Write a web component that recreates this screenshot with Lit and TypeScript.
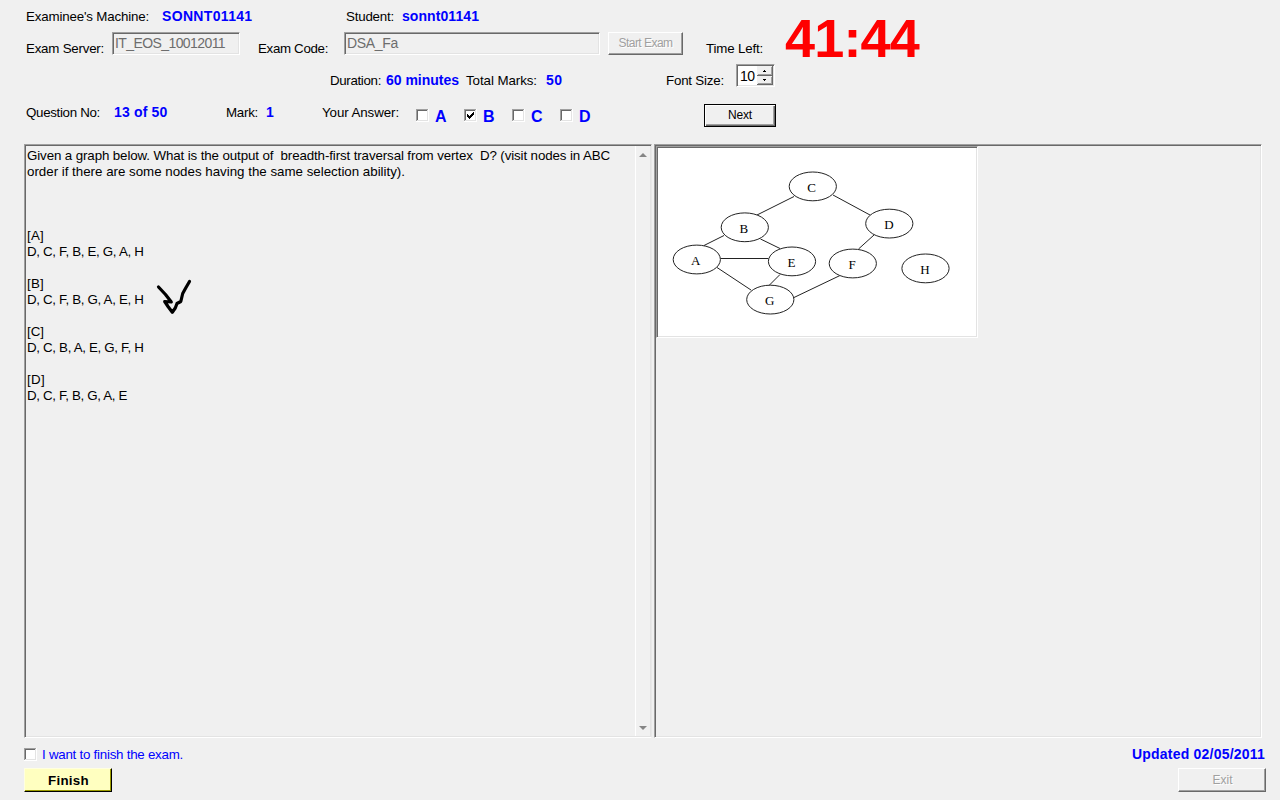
import { LitElement, html, css, svg } from "lit";
import { customElement, property } from "lit/decorators.js";

/** A single line of text whose tracking is adjusted to span a given width. */
@customElement("fit-text")
class FitText extends LitElement {
  @property() text = "";
  @property({ type: Number }) span = 0;
  static styles = css`
    :host { display: block; white-space: pre; width: max-content; }
    span { display: inline-block; }
  `;
  render() {
    return html`<span>${this.text}</span>`;
  }
  updated() {
    const el = this.renderRoot.querySelector("span") as HTMLElement;
    el.style.letterSpacing = "0px";
    const natural = el.getBoundingClientRect().width;
    if (this.span && this.text.length) {
      el.style.letterSpacing = `${(this.span - natural) / this.text.length}px`;
    }
  }
}

@customElement("check-box")
class CheckBox extends LitElement {
  @property({ type: Boolean }) checked = false;
  static styles = css`
    :host { display: block; width: 13px; height: 13px; flex: none; }
    svg { display: block; }
  `;
  render() {
    return html`<svg width="13" height="13" shape-rendering="crispEdges">
      <rect width="13" height="13" fill="#fff" />
      <path d="M0 0H12V1H1V12H0Z" fill="#a0a0a0" />
      <path d="M1 1H11V2H2V11H1Z" fill="#696969" />
      <path d="M11 1H12V12H1V11H11Z" fill="#e3e3e3" />
      ${this.checked
        ? svg`<path d="M3 5h1v1h1v1h1v-1h1v-1h1v-1h1v-1h1v3h-1v1h-1v1h-1v1h-1v1h-1v-1h-1v-1h-1z" fill="#000" />`
        : ""}
    </svg>`;
  }
}

interface Vertex { id: string; x: number; y: number; tx: number; ty: number }

const vertices: Vertex[] = [
  { id: "C", x: 812.8, y: 186.4, tx: 811.6, ty: 191.5 },
  { id: "B", x: 744.8, y: 227.3, tx: 743.8, ty: 232.5 },
  { id: "D", x: 889.3, y: 223.6, tx: 889, ty: 229 },
  { id: "A", x: 696.8, y: 259.5, tx: 695.7, ty: 265.3 },
  { id: "E", x: 792, y: 261.4, tx: 791.5, ty: 266.7 },
  { id: "F", x: 852.8, y: 263.5, tx: 852, ty: 268.7 },
  { id: "H", x: 925.5, y: 268.4, tx: 925, ty: 274 },
  { id: "G", x: 770.3, y: 299.6, tx: 769.8, ty: 304.7 },
];

const edges = [
  [794, 196.5, 757, 215],
  [833, 195, 870, 215],
  [724, 235.5, 704, 245.5],
  [760.5, 239, 780, 248.5],
  [874, 235, 858.5, 249],
  [720.5, 258.5, 768.5, 258.5],
  [717, 267.5, 751, 290],
  [780, 274.5, 769, 285.5],
  [794, 297.5, 840, 275.5],
];

const question = `Given a graph below. What is the output of  breadth-first traversal from vertex  D? (visit nodes in ABC`;

const lines: Array<[string, number]> = [
  [question, 583],
  ["order if there are some nodes having the same selection ability).", 378],
  ["", 0], ["", 0], ["", 0],
  ["[A]", 17], ["D, C, F, B, E, G, A, H", 116.5], ["", 0],
  ["[B]", 17], ["D, C, F, B, G, A, E, H", 116.5], ["", 0],
  ["[C]", 17], ["D, C, B, A, E, G, F, H", 116.5], ["", 0],
  ["[D]", 18], ["D, C, F, B, G, A, E", 100],
];

@customElement("app-root")
class AppRoot extends LitElement {
  static styles = css`
    :host {
      display: block; width: 1280px; height: 800px; overflow: hidden;
      background: #f0f0f0; color: #000;
      font: 13.33px/16px "Liberation Sans", Arial, sans-serif;
    }
    * { box-sizing: border-box; }
    .top { display: flex; height: 64px; }
    .forms { width: 785px; }
    .row { display: grid; height: 32px; padding-left: 26px; align-items: start; }
    .machine { grid-template-columns: 136px 184px 56px auto; padding-top: 9px; }
    .server { grid-template-columns: 86px 146px 86px 264px 98px auto; }
    .low { padding-top: 9px; }
    .b { font-weight: bold; color: #00f; font-size: 14px; }
    .row > .b:not(.choice) { margin-top: -1px; }
    .timer { color: #f00; font-weight: bold; font-size: 54px; line-height: 62px; padding-top: 7px; }
    .duration { grid-template-columns: 56px 80px 80px 120px 70px auto; padding-left: 330px; }
    .answers { grid-template-columns: 88px 112px 40px 56px 94px 48px 48px 48px 144px auto; height: 48px; }
    .choice { display: flex; gap: 6px; padding-top: 13px; font-size: 16px; height: 29px; }
    .choice fit-text { line-height: 16px; }
    .field {
      height: 23px; border: 1px solid; border-color: #a0a0a0 #fff #fff #a0a0a0;
      box-shadow: inset 1px 1px #696969, inset -1px -1px #e3e3e3;
      padding: 2px 0 0 2px; color: #6d6d6d; font-size: 14px;
    }
    .f1 { width: 128px; }
    .f2 { width: 256px; }
    .btn {
      display: flex; justify-content: center; align-items: center;
      height: 24px; border: 1px solid; border-color: #fff #696969 #696969 #fff;
      box-shadow: inset -1px -1px #a0a0a0; font-size: 12px;
    }
    .off { color: #a0a0a0; text-shadow: 1px 1px #fff; }
    .start { width: 75px; height: 23px; padding-bottom: 2px; }
    .next { width: 72px; height: 23px; margin-top: 8px; padding-bottom: 2px; border: 1px solid #000;
      box-shadow: inset 1px 1px #fff, inset -1px -1px #696969, inset -2px -2px #a0a0a0; }
    .spin {
      display: flex; width: 39px; height: 23px; background: #fff; color: #000;
      border: 1px solid; border-color: #a0a0a0 #fff #fff #a0a0a0;
      box-shadow: inset 1px 1px #696969, inset -1px -1px #e3e3e3;
      padding: 1px 1px 1px 3px; justify-content: space-between; font-size: 14px;
    }
    .spin fit-text { padding-top: 2px; }
    .spin svg { display: block; }
    .main { display: flex; gap: 2px; padding-left: 24px; height: 594px; }
    .panel {
      border: 1px solid; border-color: #a0a0a0 #fff #fff #a0a0a0;
      box-shadow: inset 1px 1px #696969, inset -1px -1px #e3e3e3; padding: 1px;
    }
    .question { position: relative; width: 628px; display: flex; justify-content: space-between; border-right-color: #e8e8e8; }
    .text { padding: 2px 0 0 1px; }
    .line { height: 16px; }
    .scroll {
      width: 15px; border-left: 1px solid #fff; background: #f1f1f1; display: flex;
      flex-direction: column; justify-content: space-between; align-items: center; padding: 7px 0 6px;
    }
    .tick { position: absolute; left: 129px; top: 131px; }
    .picture { width: 608px; }
    .image { width: 322px; height: 192px; background: #fff; padding: 1px; }
    svg { display: block; }
    .vertex { font: 13px "Liberation Serif", serif; text-anchor: middle; }
    .foot { display: flex; justify-content: space-between; padding: 8px 14px 0 24px; }
    .agree { display: flex; gap: 5px; height: 22px; color: #00f; padding-top: 2px; }
    .agree fit-text { margin-top: -1px; }
    .finish {
      width: 88px; background: #ffffc0; font-weight: bold; font-size: 13.33px; padding: 1px 0 0 1px;
      border-color: #ffffe0 #000 #000 #ffffe0; box-shadow: inset -1px -1px #9c9c00;
    }
    .right { display: flex; flex-direction: column; align-items: flex-end; }
    .right .b { height: 22px; padding-right: 1px; }
    .exit { width: 88px; padding-left: 1px; }
  `;

  private t(text: string, span: number, cls = "") {
    return html`<fit-text class=${cls} .text=${text} .span=${span}></fit-text>`;
  }

  private picture() {
    return html`<svg width="318" height="188" viewBox="658 148 318 188" fill="none" stroke="#222" stroke-width="1">
      ${edges.map(([a, b, c, d]) => svg`<line x1=${a} y1=${b} x2=${c} y2=${d} />`)}
      ${vertices.map((v) => svg`
        <ellipse cx=${v.x} cy=${v.y} rx="23.6" ry="14.4" fill="#fff" />
        <text class="vertex" x=${v.tx} y=${v.ty} fill="#000" stroke="none">${v.id}</text>`)}
    </svg>`;
  }

  render() {
    return html`
      <div class="top">
        <div class="forms">
          <div class="row machine">
            ${this.t("Examinee's Machine:", 123)} ${this.t("SONNT01141", 90.5, "b")}
            ${this.t("Student:", 48)} ${this.t("sonnt01141", 77, "b")}
          </div>
          <div class="row server">
            ${this.t("Exam Server:", 78, "low")}
            <div class="field f1">${this.t("IT_EOS_10012011", 110)}</div>
            ${this.t("Exam Code:", 70, "low")}
            <div class="field f2">${this.t("DSA_Fa", 51)}</div>
            <div class="btn off start">${this.t("Start Exam", 54)}</div>
            ${this.t("Time Left:", 57, "low")}
          </div>
        </div>
        ${this.t("41:44", 134, "timer")}
      </div>
      <div class="row duration">
        ${this.t("Duration:", 51, "low")} ${this.t("60 minutes", 73, "low b")}
        ${this.t("Total Marks:", 71, "low")} ${this.t("50", 16.5, "low b")}
        ${this.t("Font Size:", 58, "low")}
        <div class="spin">
          ${this.t("10", 14.5)}
          <svg width="16" height="19" shape-rendering="crispEdges">
            <rect width="16" height="19" fill="#f0f0f0" />
            <path d="M15 0h1v10H0v-1h15zM15 10h1v9H0v-1h15z" fill="#696969" />
            <path d="M14 1h1v8H1v-1h13zM14 11h1v7H1v-1h13z" fill="#a0a0a0" />
            <path d="M7 4h1v1h1v1H6v-1h1zM6 13h3v1h-1v1h-1v-1h-1z" fill="#000" />
          </svg>
        </div>
      </div>
      <div class="row answers">
        ${this.t("Question No:", 74, "low")} ${this.t("13 of 50", 53.5, "low b")}
        ${this.t("Mark:", 32, "low")} ${this.t("1", 8, "low b")}
        ${this.t("Your Answer:", 77, "low")}
        ${["A", "B", "C", "D"].map((c) => html`
          <div class="choice b"><check-box ?checked=${c === "B"}></check-box>${this.t(c, 12)}</div>`)}
        <div class="btn next">${this.t("Next", 24)}</div>
      </div>
      <div class="main">
        <div class="panel question">
          <div class="text">${lines.map(([s, w]) => html`<div class="line">${s ? this.t(s, w) : ""}</div>`)}</div>
          <div class="scroll">
            <svg width="8" height="4"><path d="M0 4L4 0L8 4Z" fill="#868686" /></svg>
            <svg width="8" height="4"><path d="M0 0L4 4L8 0Z" fill="#868686" /></svg>
          </div>
          <svg class="tick" width="42" height="42" viewBox="154 276 42 42" fill="none" stroke="#000"
            stroke-width="3.2" stroke-linecap="round" stroke-linejoin="round">
            <path d="M158.5 287L165.5 294.5L171.3 302L164.7 301.5L168 306.5L172.3 312.3L175.3 308L177 303.5L180.8 301.5L182.7 293.5L186 287.5L189.5 281.5" />
          </svg>
        </div>
        <div class="panel picture">
          <div class="panel image">${this.picture()}</div>
        </div>
      </div>
      <div class="foot">
        <div>
          <div class="agree"><check-box></check-box>${this.t("I want to finish the exam.", 141)}</div>
          <div class="btn finish">${this.t("Finish", 41)}</div>
        </div>
        <div class="right">
          ${this.t("Updated 02/05/2011", 133, "b")}
          <div class="btn off exit">${this.t("Exit", 20)}</div>
        </div>
      </div>
    `;
  }
}
